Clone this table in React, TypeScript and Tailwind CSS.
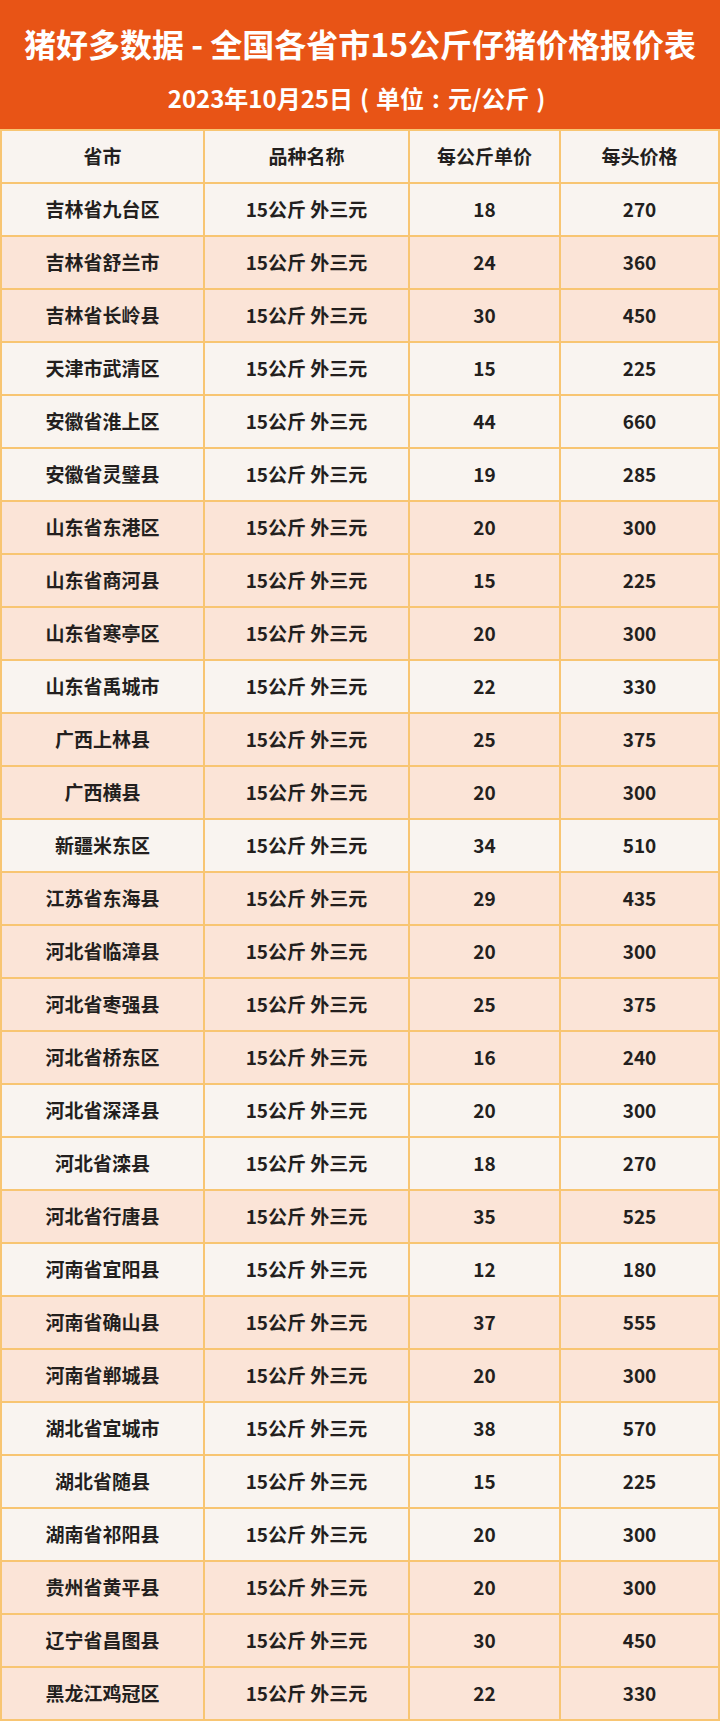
const rows: [string, number, number, boolean][] = [
  ["吉林省九台区", 18, 270, false],
  ["吉林省舒兰市", 24, 360, true],
  ["吉林省长岭县", 30, 450, true],
  ["天津市武清区", 15, 225, false],
  ["安徽省淮上区", 44, 660, false],
  ["安徽省灵璧县", 19, 285, false],
  ["山东省东港区", 20, 300, true],
  ["山东省商河县", 15, 225, true],
  ["山东省寒亭区", 20, 300, true],
  ["山东省禹城市", 22, 330, false],
  ["广西上林县", 25, 375, true],
  ["广西横县", 20, 300, true],
  ["新疆米东区", 34, 510, false],
  ["江苏省东海县", 29, 435, true],
  ["河北省临漳县", 20, 300, true],
  ["河北省枣强县", 25, 375, true],
  ["河北省桥东区", 16, 240, true],
  ["河北省深泽县", 20, 300, false],
  ["河北省滦县", 18, 270, false],
  ["河北省行唐县", 35, 525, true],
  ["河南省宜阳县", 12, 180, false],
  ["河南省确山县", 37, 555, true],
  ["河南省郸城县", 20, 300, true],
  ["湖北省宜城市", 38, 570, false],
  ["湖北省随县", 15, 225, false],
  ["湖南省祁阳县", 20, 300, false],
  ["贵州省黄平县", 20, 300, true],
  ["辽宁省昌图县", 30, 450, true],
  ["黑龙江鸡冠区", 22, 330, true],
];

function Row({ cells, peach }: { cells: (string | number)[]; peach: boolean }) {
  return (
    <div
      className={`flex h-[53px] border-t-2 border-[#f8c572] ${peach ? "bg-[#fbe4d7]" : "bg-[#f9f4f0]"}`}
    >
      <div className="w-[203px] shrink-0 flex items-center justify-center border-r-2 border-[#f8c572]">
        {cells[0]}
      </div>
      <div className="w-[205px] shrink-0 flex items-center justify-center border-r-2 border-[#f8c572]">
        {cells[1]}
      </div>
      <div className="w-[151px] shrink-0 flex items-center justify-center border-r-2 border-[#f8c572]">
        {cells[2]}
      </div>
      <div className="flex-1 flex items-center justify-center">{cells[3]}</div>
    </div>
  );
}

export default function App() {
  return (
    <div className="w-[720px] font-['Noto_Sans_CJK_SC','Noto_Sans',sans-serif] font-bold">
      {/* Banner */}
      <header className="h-[129px] bg-[#e85416] flex flex-col items-center pt-[23px] text-white">
        <h1 className="text-[32px] leading-[40px] whitespace-nowrap">
          猪好多数据 - 全国各省市15公斤仔猪价格报价表
        </h1>
        <p className="mt-[20px] text-[24px] leading-[30px] whitespace-nowrap">
          2023年10月25日<span className="mx-[7px]">(</span>单位<span className="mx-[8px]">:</span>
          元/公斤<span className="mx-[7px]">)</span>
        </p>
      </header>

      {/* Table */}
      <div className="border-x-2 border-b-2 border-[#f8c572] text-[19px] text-[#231f1e]">
        <Row cells={["省市", "品种名称", "每公斤单价", "每头价格"]} peach={false} />
        {rows.map(([city, unit, head, peach]) => (
          <Row key={city} cells={[city, "15公斤 外三元", unit, head]} peach={peach} />
        ))}
      </div>
    </div>
  );
}
